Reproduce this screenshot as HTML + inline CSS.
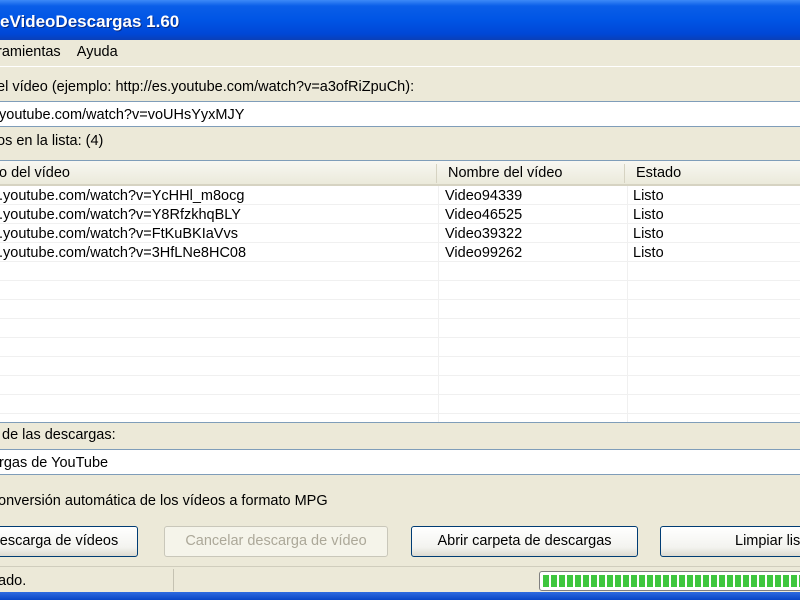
<!DOCTYPE html>
<html><head><meta charset="utf-8"><style>
body{margin:0;width:800px;height:600px;overflow:hidden;background:#ece9d8;font-family:"Liberation Sans",Tahoma,sans-serif;font-size:14.5px;color:#000;position:relative}
.a{position:absolute;white-space:nowrap}
#title{left:0;top:0;width:800px;height:40px;background:linear-gradient(#3d8af7 0%,#0a5ee8 15%,#0055e5 50%,#0047d6 85%,#0a3fb8 100%);color:#fff;font-weight:bold;font-size:17px;line-height:44px;text-shadow:1px 1px #0a2a80}
.inp{background:#fff;border:1px solid #7f9db9;height:26px;line-height:26px;box-sizing:border-box}
.list{left:-2px;top:160px;width:804px;height:263px;background:#fff;border:1px solid #7f9db9;overflow:hidden;box-sizing:border-box}
.hdr{position:absolute;left:0;top:0;height:25px;width:100%;background:linear-gradient(#f8f7f2,#ebeadb);border-bottom:2px solid #d6d3c2;box-sizing:border-box}
.row{position:absolute;left:0;width:100%;height:19px;border-bottom:1px solid #f0f0f0;box-sizing:border-box}
.vl{position:absolute;top:0;width:1px;height:263px;background:#f0f0f0}
.btn{top:526px;height:31px;border:1px solid #003c74;border-radius:3px;background:linear-gradient(#fff,#f3f3ef 70%,#dcdad0);text-align:center;line-height:29px;box-sizing:border-box}
.dis{border-color:#c9c7ba;color:#aca899;background:#f5f4ea}
</style></head><body>
<div class="a" id="title">eVideoDescargas 1.60</div>
<div class="a" style="left:0;top:40px;width:800px;height:26px;background:#ece9d8;border-bottom:1px solid #fff"></div>
<div class="a" style="left:-3px;top:44px">ramientas&nbsp;&nbsp;&nbsp;&nbsp;Ayuda</div>
<div class="a" style="left:-3px;top:79px">el vídeo (ejemplo: http://es.youtube.com/watch?v=a3ofRiZpuCh):</div>
<div class="a inp" style="left:-2px;top:101px;width:804px;padding-left:0">youtube.com/watch?v=voUHsYyxMJY</div>
<div class="a" style="left:-3px;top:133px">os en la lista: (4)</div>
<div class="a list">
<div class="hdr"></div>
<div class="a" style="left:0;top:4px">o del vídeo</div>
<div class="a" style="left:437px;top:3px;width:1px;height:19px;background:#d6d3c2"></div>
<div class="a" style="left:449px;top:4px">Nombre del vídeo</div>
<div class="a" style="left:625px;top:3px;width:1px;height:19px;background:#d6d3c2"></div>
<div class="a" style="left:637px;top:4px">Estado</div>
<div class="vl" style="left:439px;top:25px"></div><div class="vl" style="left:628px;top:25px"></div>
<div class="row" style="top:25px"></div><div class="row" style="top:44px"></div><div class="row" style="top:63px"></div><div class="row" style="top:82px"></div><div class="row" style="top:101px"></div><div class="row" style="top:120px"></div><div class="row" style="top:139px"></div><div class="row" style="top:158px"></div><div class="row" style="top:177px"></div><div class="row" style="top:196px"></div><div class="row" style="top:215px"></div><div class="row" style="top:234px"></div>
<div class="a" style="left:0;top:26px;line-height:19px">.youtube.com/watch?v=YcHHl_m8ocg<br>.youtube.com/watch?v=Y8RfzkhqBLY<br>.youtube.com/watch?v=FtKuBKIaVvs<br>.youtube.com/watch?v=3HfLNe8HC08</div>
<div class="a" style="left:446px;top:26px;line-height:19px">Video94339<br>Video46525<br>Video39322<br>Video99262</div>
<div class="a" style="left:634px;top:26px;line-height:19px">Listo<br>Listo<br>Listo<br>Listo</div>
</div>
<div class="a" style="left:2px;top:427px">de las descargas:</div>
<div class="a inp" style="left:-2px;top:449px;width:804px">rgas de YouTube</div>
<div class="a" style="left:-2px;top:493px">onversión automática de los vídeos a formato MPG</div>
<div class="a btn" style="left:-20px;width:158px">escarga de vídeos</div>
<div class="a btn dis" style="left:164px;width:224px">Cancelar descarga de vídeo</div>
<div class="a btn" style="left:411px;width:227px">Abrir carpeta de descargas</div>
<div class="a btn" style="left:660px;width:170px;text-align:left;padding-left:74px">Limpiar lista</div>
<div class="a" style="left:0;top:566px;width:800px;height:26px;border-top:1px solid #d0cdbd;background:#ece9d8"></div>
<div class="a" style="left:-2px;top:573px">ado.</div>
<div class="a" style="left:173px;top:569px;width:1px;height:22px;background:#c5c2b2"></div>
<div class="a" style="left:539px;top:571px;width:270px;height:20px;border:1px solid #7f7f7f;border-radius:3px;background:#fff;box-sizing:border-box;padding:3px 0 0 3px">
<div style="height:12px;width:262px;background:repeating-linear-gradient(90deg,#3ec63e 0 6px,#fff 6px 8px)"></div></div>
<div class="a" style="left:0;top:592px;width:800px;height:8px;background:linear-gradient(#2e6be0,#0845c6)"></div>
</body></html>
